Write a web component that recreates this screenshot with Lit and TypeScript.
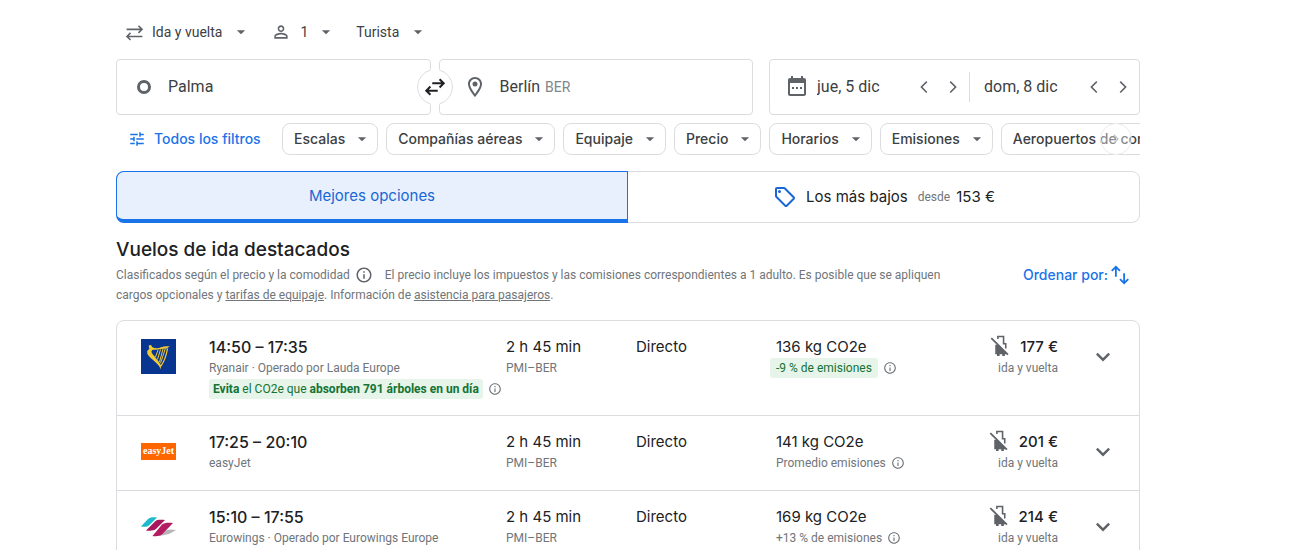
import { LitElement, html, css, svg } from "lit";
import { customElement, property, state } from "lit/decorators.js";
import { classMap } from "lit/directives/class-map.js";

const icon = (size: number, body: unknown) => html`<svg
  width=${size} height=${size} viewBox="0 0 24 24" fill="currentColor" aria-hidden="true">${body}</svg>`;

const icons = {
  roundTrip: svg`<path d="M2 8h19M17 3.500l4.500 4.500L17 12.500M22 17H3M7 12.500L2.500 17L7 21.500" fill="none" stroke="currentColor" stroke-width="2"/>`,
  person: svg`<path d="M12 5.900c1.160 0 2.100.94 2.100 2.100s-.94 2.100-2.100 2.100S9.900 9.160 9.900 8s.94-2.100 2.100-2.100m0 9c2.970 0 6.100 1.460 6.100 2.100v1.100H5.900V17c0-.64 3.130-2.100 6.100-2.100M12 4C9.790 4 8 5.790 8 8s1.790 4 4 4 4-1.790 4-4-1.790-4-4-4zm0 9c-2.670 0-8 1.340-8 4v3h16v-3c0-2.660-5.330-4-8-4z"/>`,
  drop: svg`<path d="M6.500 9.500l5.500 5.500 5.500-5.500z"/>`,
  swap: svg`<path d="M9 8h12M17 3.500l4.500 4.500L17 12.500M15 16H3M7 11.500L2.500 16L7 20.500" fill="none" stroke="currentColor" stroke-width="2.200"/>`,
  place: svg`<path d="M12 2C8.130 2 5 5.130 5 9c0 5.250 7 13 7 13s7-7.750 7-13c0-3.870-3.130-7-7-7zM7 9c0-2.760 2.240-5 5-5s5 2.240 5 5c0 2.880-2.880 7.190-5 9.880C9.920 16.210 7 11.850 7 9z"/><circle cx="12" cy="9" r="2.500"/>`,
  calendar: svg`<path d="M7 12h2v2H7zM11 12h2v2h-2zM15 12h2v2h-2zM21 5v14c0 1.100-.9 2-2 2H5c-1.110 0-2-.9-2-2V5c0-1.100.9-2 2-2h1V1h2v2h8V1h2v2h1c1.100 0 2 .9 2 2zM19 19V8H5v11z" fill-rule="evenodd"/>`,
  left: svg`<path d="M16.500 5.500L15 4l-8 8 8 8 1.500-1.500L10 12z"/>`,
  right: svg`<path d="M7.500 18.500L9 20l8-8-8-8-1.500 1.500L14 12z"/>`,
  tune: svg`<path d="M3 17v2h6v-2H3zM3 5v2h10V5H3zm10 16v-2h8v-2h-8v-2h-2v6h2zM7 9v2H3v2h4v2h2V9H7zm14 4v-2H11v2h10zm-6-4h2V7h4V5h-4V3h-2v6z"/>`,
  tag: svg`<path d="M21.410 11.580l-9-9C12.050 2.220 11.550 2 11 2H4c-1.100 0-2 .9-2 2v7c0 .55.22 1.050.59 1.420l9 9c.36.36.86.58 1.410.58s1.050-.22 1.410-.59l7-7c.37-.36.59-.86.59-1.410s-.23-1.060-.59-1.420zM13 20.010L4 11V4h7v-.01l9 9-7 7.020z"/><circle cx="6.500" cy="6.500" r="1.500"/>`,
  info: svg`<path d="M11 7h2v2h-2zm0 4h2v6h-2zm1-9C6.480 2 2 6.480 2 12s4.480 10 10 10 10-4.480 10-10S17.520 2 12 2zm0 18c-4.410 0-8-3.590-8-8s3.590-8 8-8 8 3.590 8 8-3.590 8-8 8z"/>`,
  expand: svg`<path d="M17.300 7.800L12 13.100 6.700 7.800 5 9.500l7 7 7-7z"/>`,
  sort: svg`<path d="M7.500 14V3.500M3 7.500L7.500 3l4.500 4.500M16.500 10v10.500M12 16.500l4.500 4.500 4.500-4.500" fill="none" stroke="currentColor" stroke-width="2"/>`,
  noBag: svg`<path d="M9 4.500V1.800h6.500V10H18v5.500" fill="none" stroke="currentColor" stroke-width="1.800"/><path d="M6 11l3 0L18.500 20.500V22H17v2h-3v-2h-3v2H8v-2H6z"/><path d="M1.500 3.500L20.500 22.500" stroke="currentColor" stroke-width="2"/>`,
};

interface Flight {
  logo: string;
  times: string;
  airline: string;
  note?: boolean;
  kg: string;
  emissions: string;
  low?: boolean;
  price: string;
}

const flights: Flight[] = [
  { logo: "ryanair", times: "14:50 – 17:35", airline: "Ryanair · Operado por Lauda Europe", note: true, kg: "136 kg CO2e", emissions: "-9 % de emisiones", low: true, price: "177 €" },
  { logo: "easyjet", times: "17:25 – 20:10", airline: "easyJet", kg: "141 kg CO2e", emissions: "Promedio emisiones", price: "201 €" },
  { logo: "eurowings", times: "15:10 – 17:55", airline: "Eurowings · Operado por Eurowings Europe", kg: "169 kg CO2e", emissions: "+13 % de emisiones", price: "214 €" },
];

const reset = css`
  * { box-sizing: border-box; }
  button, input, select { font: inherit; color: inherit; background: none; border: 0; padding: 0; margin: 0; }
  button { cursor: pointer; display: inline-flex; align-items: center; }
  svg { display: block; flex: none; }
`;

@customElement("airline-logo")
class AirlineLogo extends LitElement {
  @property() name = "";
  static styles = css`
    :host { display: flex; align-items: center; width: 35px; height: 35px; }
    svg { display: block; }
    .easyjet { width: 35px; height: 17px; background: #ff6600; color: #fff; font: bold 10px/15px "Liberation Serif", serif; text-align: center; }
  `;
  render() {
    if (this.name === "ryanair")
      return html`<svg width="35" height="35" viewBox="0 0 35 35" role="img" aria-label="Ryanair">
        <path fill="#073590" d="M0 0h35v35H0z"/>
        <path d="M8 6.500c1.500-1 3 0 3 1.500 3 1.500 6 1.500 9 .3 3-1.200 6-1.500 9-.8-2 .5-2 1.500-3.500 2-4 0-8 1.500-12 1.200-1.500 0-3 .3-3 1.800 0 2 2 3.500 4 6 2 2.500 4 5 5.500 8l-.3 4c-1-3-3-5.500-6-8-3-2.500-6-5-7.500-8 0-1 .5-1.500-.2-2.500 1-.5 1.500-1.500 2.500-2.500-.8-1-1-2-.5-3z" fill="#f1c933"/>
        <path d="M26.500 9.500c-1 6-3 13-7 18" stroke="#f1c933" stroke-width="1.300" fill="none"/>
        <path d="M17 11l-2.500 7M19.500 10.500L16.500 20.500M22 10l-3.500 13M24.300 9.700l-4.800 14.500" stroke="#f1c933" stroke-width="1" fill="none"/>
      </svg>`;
    if (this.name === "easyjet") return html`<div class="easyjet">easyJet</div>`;
    return html`<svg width="35" height="35" viewBox="0 0 35 35" role="img" aria-label="Eurowings">
      <path d="M18 27l8-6c3-1 6-.5 9 0l-7 4z" fill="#b5b5b8"/>
      <path d="M0 17.500l7-7.500c2-2 5-2 9-1.500l-7.500 7.500c-2 2-5 2-8.500 1.500z" fill="#1fb8cc"/>
      <path d="M5 21.500l9-9c2-2 6-1.800 10-1.500l-9 9c-2 2-6 1.800-10 1.500z" fill="#a8165c"/>
      <path d="M11.500 27l9.500-11.500c2-2 7-2 11-1.500l-10.500 11c-2 2-6 2.500-10 2z" fill="#b31b62"/>
    </svg>`;
  }
}

@customElement("flight-row")
class FlightRow extends LitElement {
  @property({ attribute: false }) flight!: Flight;
  static styles = [reset, css`
    :host { display: block; }
    .row { display: grid; align-items: start; grid-template-columns: 68px minmax(0, 1fr) 130px 140px 192px 90px 81px; min-height: 74px; padding: 16px 0 16px 24px; color: #202124; }
    .main { font: 15px/20px var(--display); }
    .strong { font-weight: 500; }
    .times { font-size: 16px; }
    .sub { color: #70757a; font-size: 12px; line-height: 20px; display: flex; align-items: center; white-space: nowrap; }
    .stack { display: flex; flex-direction: column; gap: 1px; min-width: 0; }
    .info { color: #70757a; margin-left: 5px; }
    .green { background: #e6f4ea; color: #137333; border-radius: 3px; padding: 0 4px; }
    .pill { padding: 0 6px; margin-left: -6px; }
    .price { display: flex; justify-content: flex-end; align-items: center; gap: 9px; height: 20px; }
    .price svg { color: #5f6368; margin-top: -4px; }
    .end { justify-content: flex-end; }
    .more { justify-content: center; color: #5f6368; height: 24px; margin: 8px 0 0 9px; }
    airline-logo { margin-top: 2px; }
  `];
  render() {
    const f = this.flight;
    const info = html`<button class="info" aria-label="Más información">${icon(14, icons.info)}</button>`;
    return html`<div class="row">
      <airline-logo name=${f.logo}></airline-logo>
      <div class="stack">
        <div class="main strong times">${f.times}</div>
        <div class="sub">${f.airline}</div>
        ${f.note ? html`<div class="sub"><span class="green"><b>Evita</b> el CO2e que <b>absorben 791 árboles en un día</b></span>${info}</div>` : ""}
      </div>
      <div class="stack"><div class="main">2 h 45 min</div><div class="sub">PMI–BER</div></div>
      <div class="main">Directo</div>
      <div class="stack"><div class="main">${f.kg}</div>
        <div class="sub"><span class=${classMap({ green: !!f.low, pill: !!f.low })}>${f.emissions}</span>${info}</div></div>
      <div class="stack"><div class="main strong price">${icon(21, icons.noBag)}<span>${f.price}</span></div><div class="sub end">ida y vuelta</div></div>
      <button class="more" aria-label="Detalles del vuelo">${icon(24, icons.expand)}</button>
    </div>`;
  }
}

@customElement("app-root")
class AppRoot extends LitElement {
  @state() private tab = 0;
  static styles = [reset, css`
    :host { display: block; height: 100vh; overflow: hidden; background: #fff; color: #3c4043; font: 14px/20px Roboto, sans-serif; --display: Inter, sans-serif; padding: 0 33px 0 0; box-sizing: border-box; }
    .page { max-width: 1024px; margin: 0 auto; }
    .trip { display: flex; align-items: center; height: 59px; padding: 5px 0 0 9px; gap: 21px; color: #3c4043; }
    .pick { display: flex; align-items: center; color: #5f6368; }
    .pick select { appearance: none; field-sizing: content; color: #3c4043; margin-right: 10px; }
    .pick .lead { display: flex; margin-right: 8px; }
    .pax { color: #3c4043; gap: 9px; }
    .pax svg, .chip svg { color: #5f6368; }
    .search { display: grid; grid-template-columns: minmax(0, 1fr) minmax(0, 1fr) 379px; column-gap: 8px; position: relative; }
    .field { display: flex; align-items: center; height: 56px; border: 1px solid #dadce0; border-radius: 4px; font-size: 16px; color: #3c4043; }
    .field svg { color: #5f6368; }
    .from { padding-left: 18px; gap: 15px; position: relative; }
    .from input { flex: 1; min-width: 0; }
    .to { padding-left: 23px; }
    .to input { field-sizing: content; margin: 0 5px 0 13px; }
    .code { font-size: 14px; color: #80868b; }
    .swap { position: absolute; right: -23px; top: 9px; width: 36px; height: 36px; z-index: 1; color: #202124; }
    .field.from .swap svg { color: #202124; }
    .dates { margin-left: 8px; }
    .when { display: flex; align-items: center; flex: 1; height: 30px; min-width: 0; padding-right: 2px; }
    .when input { flex: 1; min-width: 0; width: 60px; }
    .when + .when { border-left: 1px solid #dadce0; padding-left: 14px; flex: 0 0 170px; }
    .depart { padding-left: 15px; gap: 8px; }
    .step { width: 29px; justify-content: center; }
    .steps { display: flex; }
    .filters { position: relative; display: flex; gap: 8px; margin-top: 8px; overflow: hidden; font: 500 14px/20px var(--display); }
    .all { color: #1a73e8; width: 158px; padding-left: 12px; gap: 8px; flex: none; white-space: nowrap; }
    .chip { flex: none; height: 32px; border: 1px solid #dadce0; border-radius: 8px; padding: 0 6px 0 11px; gap: 8px; color: #3c4043; }
    .next { position: absolute; right: 8px; top: 0; width: 32px; height: 32px; justify-content: center; border-radius: 50%; background: rgba(255,255,255,.4); border: 1px solid #ececee; color: #bdc1c6; }
    .tabs { display: grid; grid-template-columns: 1fr 1fr; margin-top: 16px; height: 52px; border: 1px solid #dadce0; border-radius: 8px; }
    .tab { justify-content: center; font: 15px/20px var(--display); color: #202124; margin: -1px -1px -1px 0; border-radius: 0 8px 8px 0; }
    .tab:first-child { border-radius: 8px 0 0 8px; margin: -1px 0 -1px -1px; }
    .tab.on { background: #e8f0fe; color: #1967d2; border: 1px solid #1a73e8; border-bottom-width: 4px; }
    .tab svg { color: #1967d2; margin-right: 9px; }
    .tab small { font: 12px/20px Roboto, sans-serif; color: #70757a; margin: 0 6px 0 10px; }
    h1 { margin: 15px 0 0; font: 500 19px/24px var(--display); color: #202124; }
    .about { display: flex; justify-content: space-between; align-items: flex-start; }
    .about p { margin: 3px 0 0; flex: 0 1 850px; font-size: 12px; line-height: 20px; color: #70757a; }
    .about a { color: inherit; text-decoration: underline; }
    .hint { vertical-align: top; margin: 1px 12px 0 2px; color: #5f6368; }
    .sort { color: #1a73e8; font: 500 14px/24px var(--display); gap: 1px; padding: 1px 9px 0 0; }
    .list { list-style: none; margin: 15px 0 0; padding: 0; border: 1px solid #dadce0; border-radius: 8px; }
    .list li + li { border-top: 1px solid #dadce0; }
  `];

  render() {
    const chips = ["Escalas", "Compañías aéreas", "Equipaje", "Precio", "Horarios", "Emisiones", "Aeropuertos de conexión"];
    const steps = html`<div class="steps"><button class="step" aria-label="Día anterior">${icon(18, icons.left)}</button><button class="step" aria-label="Día siguiente">${icon(18, icons.right)}</button></div>`;
    return html`<main class="page">
      <div class="trip">
        <label class="pick"><span class="lead">${icon(19, icons.roundTrip)}</span>
          <select aria-label="Tipo de viaje"><option>Ida y vuelta</option><option>Solo ida</option></select>${icon(18, icons.drop)}</label>
        <button class="pax" aria-label="1 pasajero">${icon(20, icons.person)}<span>1</span>${icon(18, icons.drop)}</button>
        <label class="pick"><select aria-label="Clase"><option>Turista</option><option>Business</option></select>${icon(18, icons.drop)}</label>
      </div>
      <div class="search">
        <label class="field from">
          <svg width="18" height="18" viewBox="0 0 18 18" aria-hidden="true"><circle cx="9" cy="9" r="5.500" fill="none" stroke="currentColor" stroke-width="3"/></svg>
          <input aria-label="Origen" value="Palma">
          <button class="swap" aria-label="Intercambiar origen y destino">
            <svg width="36" height="36" viewBox="0 0 36 36"><circle cx="18" cy="18" r="18" fill="#fff"/>
              <path d="M13.500 1.100a17.500 17.500 0 0 0 0 33.800M22.500 1.100a17.500 17.500 0 0 1 0 33.800" fill="none" stroke="#dadce0"/>
              <svg x="7" y="7" width="22" height="22" viewBox="0 0 24 24">${icons.swap}</svg></svg>
          </button>
        </label>
        <label class="field to">${icon(24, icons.place)}<input aria-label="Destino" value="Berlín"><span class="code">BER</span></label>
        <div class="field dates">
          <div class="when depart">${icon(24, icons.calendar)}<input aria-label="Salida" value="jue, 5 dic">${steps}</div>
          <div class="when"><input aria-label="Vuelta" value="dom, 8 dic">${steps}</div>
        </div>
      </div>
      <div class="filters">
        <button class="all">${icon(18, icons.tune)}Todos los filtros</button>
        ${chips.map((c) => html`<button class="chip">${c}${icon(18, icons.drop)}</button>`)}
        <button class="next" aria-label="Siguiente">${icon(14, icons.right)}</button>
      </div>
      <div class="tabs" role="tablist">
        <button role="tab" class=${classMap({ tab: true, on: this.tab === 0 })} @click=${() => (this.tab = 0)}>Mejores opciones</button>
        <button role="tab" class=${classMap({ tab: true, on: this.tab === 1 })} @click=${() => (this.tab = 1)}>${icon(24, icons.tag)}Los más bajos<small>desde</small>153 €</button>
      </div>
      <h1>Vuelos de ida destacados</h1>
      <div class="about">
        <p>Clasificados según el precio y la comodidad <button class="hint" aria-label="Más información">${icon(18, icons.info)}</button>El precio incluye los impuestos y las comisiones correspondientes a 1 adulto. Es posible que se apliquen cargos opcionales y <a href="#equipaje">tarifas de equipaje</a>. Información de <a href="#asistencia">asistencia para pasajeros</a>.</p>
        <button class="sort">Ordenar por:${icon(22, icons.sort)}</button>
      </div>
      <ul class="list">${flights.map((f) => html`<li><flight-row .flight=${f}></flight-row></li>`)}</ul>
    </main>`;
  }
}
